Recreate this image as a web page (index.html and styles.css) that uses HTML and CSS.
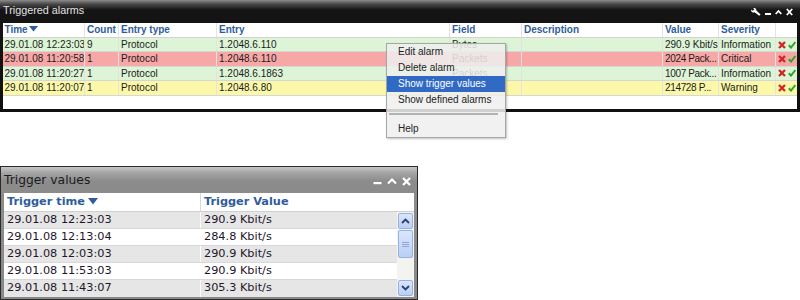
FILE: index.html
```html
<!DOCTYPE html>
<html>
<head>
<meta charset="utf-8">
<title>Alarms</title>
<link rel="stylesheet" href="styles.css">
</head>
<body>
<div class="panel alarms">
  <div class="titlebar">
    <span class="title">Triggered alarms</span>
    <div class="tools">
      <svg width="10" height="8" viewBox="0 0 10 8"><path d="M0.3 1.6 A2.3 2.3 0 0 0 3.6 4.3 L8.2 7.8 L9.6 6.4 L5.3 2.6 A2.3 2.3 0 0 0 2.2 0 L3.3 1.5 L1.8 2.8 Z" fill="#fff"/></svg>
      <svg width="6" height="8" viewBox="0 0 6 8"><rect x="0" y="5" width="6" height="2" fill="#fff"/></svg>
      <svg width="7" height="8" viewBox="0 0 7 8"><path d="M0.7 6 L3.5 3 L6.3 6" stroke="#fff" stroke-width="1.8" fill="none"/></svg>
      <svg width="7" height="8" viewBox="0 0 7 8"><path d="M0.8 1 L6.2 7 M6.2 1 L0.8 7" stroke="#fff" stroke-width="1.8"/></svg>
    </div>
  </div>
  <div class="alarm-body">
    <div class="arow head">
      <div class="c first">Time <svg class="sort" width="9" height="6" viewBox="0 0 9 6"><path d="M0 0 H9 L4.5 5.5 Z" fill="#2f5d9c"/></svg></div>
      <div class="c">Count</div>
      <div class="c">Entry type</div>
      <div class="c">Entry</div>
      <div class="c">Field</div>
      <div class="c">Description</div>
      <div class="c">Value</div>
      <div class="c">Severity</div>
      <div class="c last"></div>
    </div>
    <div class="arow green">
      <div class="c first">29.01.08 12:23:03</div>
      <div class="c">9</div>
      <div class="c">Protocol</div>
      <div class="c">1.2048.6.110</div>
      <div class="c">Bytes</div>
      <div class="c"></div>
      <div class="c">290.9 Kbit/s</div>
      <div class="c">Information</div>
      <div class="c last acts"><svg class="ico" width="8" height="8" viewBox="0 0 8 8"><path d="M1 1L7 7M7 1L1 7" stroke="#d42424" stroke-width="2.3"/></svg><svg class="ico" width="8" height="8" viewBox="0 0 8 8"><path d="M0.8 4.2L3 6.6L7.4 1" stroke="#2ca52c" stroke-width="2" fill="none"/></svg></div>
    </div>
    <div class="arow pink">
      <div class="c first">29.01.08 11:20:58</div>
      <div class="c">1</div>
      <div class="c">Protocol</div>
      <div class="c">1.2048.6.110</div>
      <div class="c">Packets</div>
      <div class="c"></div>
      <div class="c tight">2024 Pack...</div>
      <div class="c">Critical</div>
      <div class="c last acts"><svg class="ico" width="8" height="8" viewBox="0 0 8 8"><path d="M1 1L7 7M7 1L1 7" stroke="#d42424" stroke-width="2.3"/></svg><svg class="ico" width="8" height="8" viewBox="0 0 8 8"><path d="M0.8 4.2L3 6.6L7.4 1" stroke="#2ca52c" stroke-width="2" fill="none"/></svg></div>
    </div>
    <div class="arow green">
      <div class="c first">29.01.08 11:20:27</div>
      <div class="c">1</div>
      <div class="c">Protocol</div>
      <div class="c">1.2048.6.1863</div>
      <div class="c">Packets</div>
      <div class="c"></div>
      <div class="c tight">1007 Pack...</div>
      <div class="c">Information</div>
      <div class="c last acts"><svg class="ico" width="8" height="8" viewBox="0 0 8 8"><path d="M1 1L7 7M7 1L1 7" stroke="#d42424" stroke-width="2.3"/></svg><svg class="ico" width="8" height="8" viewBox="0 0 8 8"><path d="M0.8 4.2L3 6.6L7.4 1" stroke="#2ca52c" stroke-width="2" fill="none"/></svg></div>
    </div>
    <div class="arow yellow">
      <div class="c first">29.01.08 11:20:07</div>
      <div class="c">1</div>
      <div class="c">Protocol</div>
      <div class="c">1.2048.6.80</div>
      <div class="c">Packets</div>
      <div class="c"></div>
      <div class="c tight">214728 P...</div>
      <div class="c">Warning</div>
      <div class="c last acts"><svg class="ico" width="8" height="8" viewBox="0 0 8 8"><path d="M1 1L7 7M7 1L1 7" stroke="#d42424" stroke-width="2.3"/></svg><svg class="ico" width="8" height="8" viewBox="0 0 8 8"><path d="M0.8 4.2L3 6.6L7.4 1" stroke="#2ca52c" stroke-width="2" fill="none"/></svg></div>
    </div>
  </div>
</div>

<div class="menu">
  <div class="mi">Edit alarm</div>
  <div class="mi">Delete alarm</div>
  <div class="mi active">Show trigger values</div>
  <div class="mi">Show defined alarms</div>
  <div class="sep"></div>
  <div class="mi">Help</div>
</div>

<div class="panel trig">
  <div class="ttitle">
    <span class="ttext">Trigger values</span>
    <div class="ttools">
      <svg width="9" height="8" viewBox="0 0 9 8"><rect x="0.5" y="5" width="8" height="2.2" fill="#fff"/></svg>
      <svg width="10" height="8" viewBox="0 0 10 8"><path d="M1 6.5 L5 2.5 L9 6.5" stroke="#fff" stroke-width="2.2" fill="none"/></svg>
      <svg width="9" height="9" viewBox="0 0 9 9"><path d="M1 1 L8 8 M8 1 L1 8" stroke="#fff" stroke-width="2.3"/></svg>
    </div>
  </div>
  <div class="tv">
    <div class="tv-head">
      <div class="tc">Trigger time <svg class="sort2" width="10" height="7" viewBox="0 0 10 7"><path d="M0 0 H10 L5 6.5 Z" fill="#2f5d9c"/></svg></div>
      <div class="tc last">Trigger Value</div>
    </div>
    <div class="tv-body">
      <div class="tv-rows">
        <div class="trow odd"><div class="tc">29.01.08 12:23:03</div><div class="tc last">290.9 Kbit/s</div></div>
        <div class="trow"><div class="tc">29.01.08 12:13:04</div><div class="tc last">284.8 Kbit/s</div></div>
        <div class="trow odd"><div class="tc">29.01.08 12:03:03</div><div class="tc last">290.9 Kbit/s</div></div>
        <div class="trow"><div class="tc">29.01.08 11:53:03</div><div class="tc last">290.9 Kbit/s</div></div>
        <div class="trow odd"><div class="tc">29.01.08 11:43:07</div><div class="tc last">305.3 Kbit/s</div></div>
      </div>
      <div class="scrollbar">
        <div class="sbtn"><svg width="9" height="6" viewBox="0 0 9 6"><path d="M1 5 L4.5 1.5 L8 5" stroke="#2e3f72" stroke-width="1.8" fill="none"/></svg></div>
        <div class="thumb"><span></span><span></span><span></span></div>
        <div class="track"></div>
        <div class="sbtn"><svg width="9" height="6" viewBox="0 0 9 6"><path d="M1 1 L4.5 4.5 L8 1" stroke="#2e3f72" stroke-width="1.8" fill="none"/></svg></div>
      </div>
    </div>
  </div>
</div>
</body>
</html>
```

FILE: styles.css
```css
body {
  margin: 0;
  background: #fff;
  font-family: "Liberation Sans", Arial, sans-serif;
}

/* ---------- Triggered alarms panel ---------- */
.alarms {
  width: 800px;
  box-sizing: border-box;
  padding: 0 3px 3px;
  background: linear-gradient(to bottom, #8c8c8c 0, #4a4a4a 4px, #141414 10px, #101010 100%);
}

.titlebar {
  height: 20px;
  display: flex;
  align-items: center;
  justify-content: space-between;
}

.title {
  font-size: 10.8px;
  color: #e2e2e2;
  line-height: 20px;
}

.tools {
  display: flex;
  align-items: center;
  gap: 4px;
  margin-right: 4px;
  padding-top: 3px;
}

.tools svg { display: block; }

.alarm-body {
  margin-top: 3px;
  background: #fff;
  height: 86px;
}

.arow {
  display: grid;
  grid-template-columns: 82px 34px 98px 233px 72px 141px 56px 57px 21px;
  height: 14.4px;
  box-sizing: border-box;
  border-bottom: 1px solid #d6d6d6;
  font-size: 10px;
  line-height: 13.4px;
  color: #1c1c1c;
}

.arow.head {
  height: 15px;
  line-height: 14px;
  font-weight: bold;
  color: #2f5d9c;
  border-bottom-color: #d2d2d2;
}

.arow.green { background: #ddf5d6; }
.arow.pink { background: #f8a7a7; }
.arow.yellow { background: #fbf8aa; }

.c {
  border-right: 1px solid #e3e3e3;
  padding-left: 2px;
  white-space: nowrap;
  overflow: hidden;
}

.c.tight { letter-spacing: -0.35px; }

.arow .c.first { padding-left: 1.5px; }
.c.last { border-right: none; }

.sort {
  vertical-align: 1px;
  margin-left: -1px;
}

.acts {
  display: flex;
  align-items: center;
  gap: 2px;
}

.ico { display: block; }

/* ---------- Context menu ---------- */
.menu {
  position: absolute;
  left: 386px;
  top: 43px;
  width: 120px;
  box-sizing: border-box;
  border: 1px solid #a6a6a6;
  background: rgba(239, 239, 239, 0.86);
  box-shadow: 1px 1px 2px rgba(0, 0, 0, 0.25);
  font-size: 10px;
  color: #222;
}

.mi {
  height: 16px;
  line-height: 16px;
  padding-left: 11px;
  white-space: nowrap;
}

.mi.active {
  background: #316ac5;
  color: #fff;
}

.sep {
  height: 2px;
  background: #b2b2b2;
  margin: 5px 7px 6px 2px;
}

/* ---------- Trigger values panel ---------- */
.trig {
  margin-top: 54px;
  width: 418px;
  height: 134px;
  box-sizing: border-box;
  border: 1px solid #2a2a2a;
  padding: 0 3px 3px;
  background: linear-gradient(to bottom, #c6c6c6 0, #a4a4a4 6px, #8c8c8c 14px, #888 100%);
}

.ttitle {
  height: 26px;
  display: flex;
  align-items: center;
  justify-content: space-between;
}

.ttext {
  font-family: "DejaVu Sans", Verdana, sans-serif;
  font-size: 12.3px;
  color: #1c1c1c;
}

.ttools {
  display: flex;
  align-items: center;
  gap: 5px;
  margin-right: 3px;
  padding-top: 2px;
}

.ttools svg { display: block; }

.tv {
  background: #fff;
  height: 104px;
  font-family: "DejaVu Sans", Verdana, sans-serif;
  font-size: 11.3px;
}

.tv-head {
  display: grid;
  grid-template-columns: 197px 1fr;
  height: 19px;
  box-sizing: border-box;
  border-bottom: 1px solid #d0d0d0;
  line-height: 18px;
  font-weight: bold;
  color: #2f5d9c;
}

.tv-head .tc { border-right-color: #d8d8d8; }

.sort2 { vertical-align: 0; margin-left: -1px; }

.tc {
  padding-left: 3px;
  border-right: 1px solid #fff;
  white-space: nowrap;
  overflow: hidden;
}

.tc.last { border-right: none; }

.tv-body {
  display: flex;
  height: 85px;
}

.tv-rows { width: 393px; }

.trow {
  display: grid;
  grid-template-columns: 197px 1fr;
  height: 17px;
  box-sizing: border-box;
  border-bottom: 1px solid #d8d8d8;
  line-height: 16px;
  color: #24162a;
}

.trow.odd { background: #e6e6e6; }
.trow:last-child { border-bottom: none; }

.scrollbar {
  width: 17px;
  box-sizing: border-box;
  padding: 1px;
  background: #f3f3ef;
  display: flex;
  flex-direction: column;
}

.sbtn, .thumb {
  height: 16px;
  box-sizing: border-box;
  border: 1px solid #98b1e2;
  border-radius: 2px;
  background: linear-gradient(to bottom, #dbe6fc, #b9cff5);
  display: flex;
  align-items: center;
  justify-content: center;
}

.thumb {
  height: 28px;
  margin-top: 1px;
  flex-direction: column;
  gap: 1px;
}

.thumb span {
  display: block;
  width: 7px;
  height: 1px;
  background: #8ea8dc;
}

.track { flex: 1; }

.sbtn svg { display: block; }
```
